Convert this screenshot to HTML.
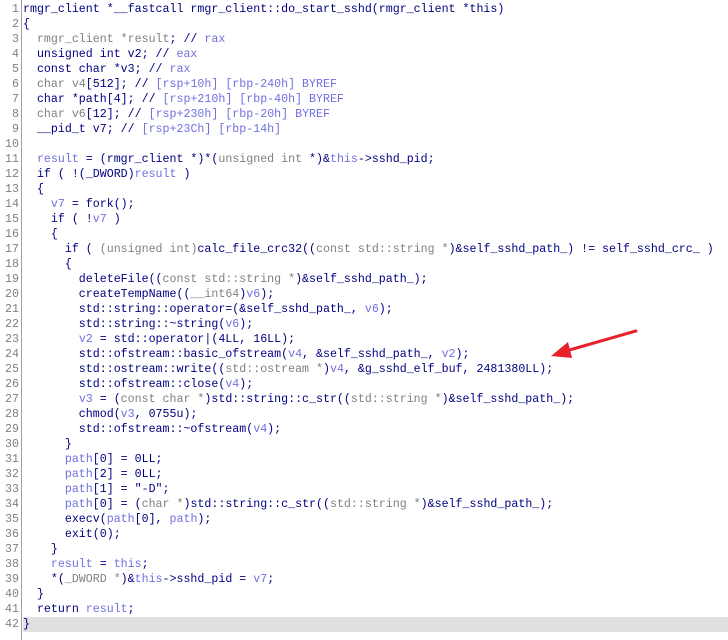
<!DOCTYPE html>
<html><head><style>
body{margin:0;background:#fff;width:728px;height:640px;overflow:hidden;position:relative}
.c{position:absolute;left:0;top:2px;width:728px;font-family:"Liberation Mono",monospace;font-size:11.63px;line-height:15px;color:#000080}
.l{height:15px;position:relative;white-space:pre}
.n{display:inline-block;width:19px;text-align:right;color:#808080;padding-right:4px}
.hl{background:#e0e0e0}
.g{color:#808080}.v{color:#7070e0}
.gut{position:absolute;left:21px;top:0;width:1px;height:640px;background:#a0a0a0}
</style></head><body>
<div class="c"><div class="l"><span class="n">1</span>rmgr_client *__fastcall rmgr_client::do_start_sshd(rmgr_client *this)</div><div class="l"><span class="n">2</span>{</div><div class="l"><span class="n">3</span>  <span class="g">rmgr_client *result</span>; // <span class="v">rax</span></div><div class="l"><span class="n">4</span>  unsigned int v2; // <span class="v">eax</span></div><div class="l"><span class="n">5</span>  const char *v3; // <span class="v">rax</span></div><div class="l"><span class="n">6</span>  <span class="g">char v4</span>[512]; // <span class="v">[rsp+10h] [rbp-240h] BYREF</span></div><div class="l"><span class="n">7</span>  char *path[4]; // <span class="v">[rsp+210h] [rbp-40h] BYREF</span></div><div class="l"><span class="n">8</span>  <span class="g">char v6</span>[12]; // <span class="v">[rsp+230h] [rbp-20h] BYREF</span></div><div class="l"><span class="n">9</span>  __pid_t v7; // <span class="v">[rsp+23Ch] [rbp-14h]</span></div><div class="l"><span class="n">10</span></div><div class="l"><span class="n">11</span>  <span class="v">result</span> = (rmgr_client *)*(<span class="g">unsigned int</span> *)&amp;<span class="v">this</span>-&gt;sshd_pid;</div><div class="l"><span class="n">12</span>  if ( !(_DWORD)<span class="v">result</span> )</div><div class="l"><span class="n">13</span>  {</div><div class="l"><span class="n">14</span>    <span class="v">v7</span> = fork();</div><div class="l"><span class="n">15</span>    if ( !<span class="v">v7</span> )</div><div class="l"><span class="n">16</span>    {</div><div class="l"><span class="n">17</span>      if ( <span class="g">(unsigned int)</span>calc_file_crc32((<span class="g">const std::string *</span>)&amp;self_sshd_path_) != self_sshd_crc_ )</div><div class="l"><span class="n">18</span>      {</div><div class="l"><span class="n">19</span>        deleteFile((<span class="g">const std::string *</span>)&amp;self_sshd_path_);</div><div class="l"><span class="n">20</span>        createTempName((<span class="g">__int64</span>)<span class="v">v6</span>);</div><div class="l"><span class="n">21</span>        std::string::operator=(&amp;self_sshd_path_, <span class="v">v6</span>);</div><div class="l"><span class="n">22</span>        std::string::~string(<span class="v">v6</span>);</div><div class="l"><span class="n">23</span>        <span class="v">v2</span> = std::operator|(4LL, 16LL);</div><div class="l"><span class="n">24</span>        std::ofstream::basic_ofstream(<span class="v">v4</span>, &amp;self_sshd_path_, <span class="v">v2</span>);</div><div class="l"><span class="n">25</span>        std::ostream::write((<span class="g">std::ostream *</span>)<span class="v">v4</span>, &amp;g_sshd_elf_buf, 2481380LL);</div><div class="l"><span class="n">26</span>        std::ofstream::close(<span class="v">v4</span>);</div><div class="l"><span class="n">27</span>        <span class="v">v3</span> = (<span class="g">const char *</span>)std::string::c_str((<span class="g">std::string *</span>)&amp;self_sshd_path_);</div><div class="l"><span class="n">28</span>        chmod(<span class="v">v3</span>, 0755u);</div><div class="l"><span class="n">29</span>        std::ofstream::~ofstream(<span class="v">v4</span>);</div><div class="l"><span class="n">30</span>      }</div><div class="l"><span class="n">31</span>      <span class="v">path</span>[0] = 0LL;</div><div class="l"><span class="n">32</span>      <span class="v">path</span>[2] = 0LL;</div><div class="l"><span class="n">33</span>      <span class="v">path</span>[1] = "-D";</div><div class="l"><span class="n">34</span>      <span class="v">path</span>[0] = (<span class="g">char *</span>)std::string::c_str((<span class="g">std::string *</span>)&amp;self_sshd_path_);</div><div class="l"><span class="n">35</span>      execv(<span class="v">path</span>[0], <span class="v">path</span>);</div><div class="l"><span class="n">36</span>      exit(0);</div><div class="l"><span class="n">37</span>    }</div><div class="l"><span class="n">38</span>    <span class="v">result</span> = <span class="v">this</span>;</div><div class="l"><span class="n">39</span>    *(<span class="g">_DWORD *</span>)&amp;<span class="v">this</span>-&gt;sshd_pid = <span class="v">v7</span>;</div><div class="l"><span class="n">40</span>  }</div><div class="l"><span class="n">41</span>  return <span class="v">result</span>;</div><div class="l hl"><span class="n" style="background:#fff">42</span>}</div></div>
<div class="gut"></div>
<svg style="position:absolute;left:0;top:0" width="728" height="640">
<line x1="636" y1="331" x2="566" y2="351" stroke="#e8222a" stroke-width="3" stroke-linecap="round"/>
<polygon points="551,356 568,342 572,358" fill="#e8222a"/>
</svg>
</body></html>
